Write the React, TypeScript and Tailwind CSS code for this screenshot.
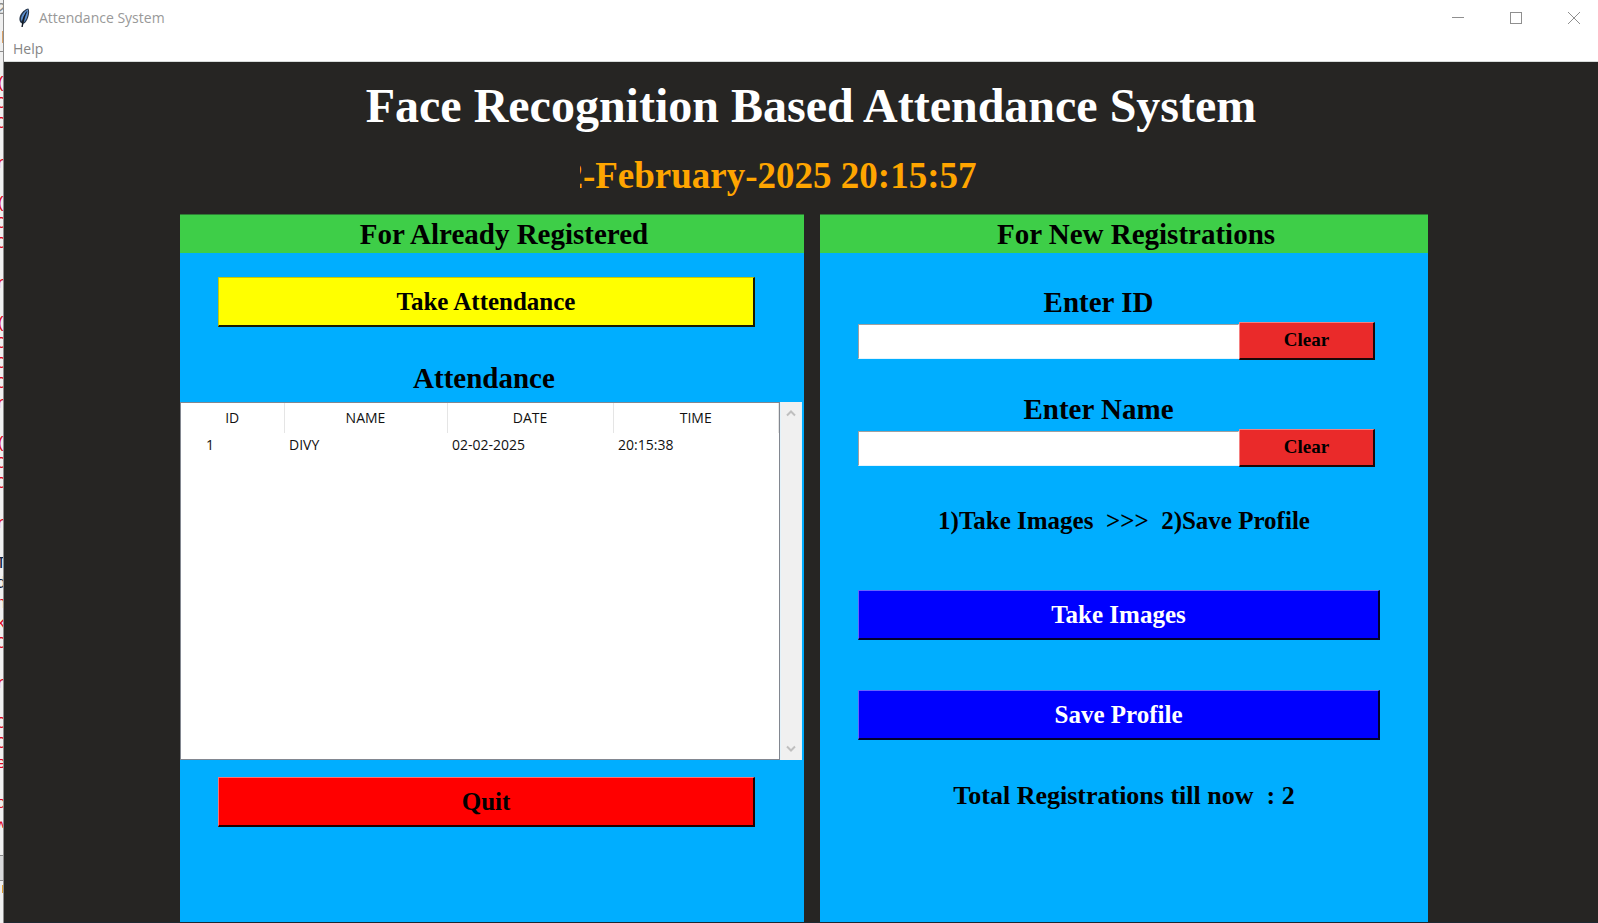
import { useState } from "react";

const codeLines = [
  "(", "C", "C", "", "r", "", "(", "C", "C", "", "r", "", "(", "C", "C", "C", "r", "", "(", "C",
  "C", "", "r", "", "T", "d", "n", "k", "C", "", "r", "", "C", "C", "e", "", "o", "w",
];

const records = [{ id: "1", name: "DIVY", date: "02-02-2025", time: "20:15:38" }];

const raised = "block border-t border-l border-r-2 border-b-2 font-bold text-center";

function EditorBehind() {
  return (
    <div aria-hidden="true" className="flex w-1 shrink-0 flex-col overflow-hidden border-r border-[#8c8c8c] bg-[#f0f0f0] font-['Liberation_Mono',monospace] text-[17px] leading-5">
      <div className="flex h-[52px] flex-col justify-between border-b border-[#8c8c8c]">
        <span className="-ml-1 text-[#8a8a8a]">2</span>
        <span className="mb-2 ml-[2px] h-3 w-1 bg-[#d9a066]" />
      </div>
      <div className="mt-[22px] mb-[21px]">
        {codeLines.map((line, i) => (
          <div key={i} className={line === "T" || line === "d" ? "-ml-1 h-5 text-[#102040]" : "-ml-1 h-5 text-[#e00020]"}>
            {line}
          </div>
        ))}
      </div>
      <div className="h-[26px] border-y border-[#8c8c8c] bg-[#d9dadb]" />
      <div className="mt-1 ml-[2px] h-2 w-1 bg-[#e0a030]" />
    </div>
  );
}

function Feather() {
  return (
    <svg viewBox="0 0 16 20" className="h-5 w-4" aria-hidden="true">
      <path d="M12.300 .6c1.300 1.600 1 5.400-.1 8.600-.9 2.600-2.300 5.400-4.600 6.600l-1 3.300-.8-.2.200-3.300C3.300 14.200 2.900 11 4 8.100 5.200 4.600 9.200 1 12.300.6z" fill="#26364a" />
      <path d="M11.800 1.500c.8 2.300.1 5.200-1 8.300-.7 1.900-1.600 3.600-2.900 4.400L9.400 8.200 11.200 3.400 7.600 8.300 5.700 13.200c-1-1.400-.8-3.500.1-5.400C6.900 5 9.500 2.300 11.800 1.500z" fill="#5b8fd0" />
      <path d="M10.800 3.500C8.500 7 7 11.500 6 19" stroke="#0d1219" strokeWidth="1" fill="none" />
    </svg>
  );
}

function TitleBar() {
  return (
    <div className="flex h-9 items-center bg-white pl-3 text-[#999]">
      <Feather />
      <span className="ml-[7px] flex-1 text-sm leading-5">Attendance System</span>
      <div className="flex gap-[10px]">
        <button aria-label="Minimize" className="flex h-9 w-12 items-center justify-center">
          <svg viewBox="0 0 12 12" className="size-3"><path d="M0 5.500h12" stroke="#8f8f8f" /></svg>
        </button>
        <button aria-label="Maximize" className="flex h-9 w-12 items-center justify-center">
          <svg viewBox="0 0 12 12" className="size-3"><rect x=".5" y=".5" width="11" height="11" fill="none" stroke="#8f8f8f" /></svg>
        </button>
        <button aria-label="Close" className="flex h-9 w-12 items-center justify-center">
          <svg viewBox="0 0 12 12" className="size-3"><path d="M0 0l12 12M12 0L0 12" stroke="#8f8f8f" /></svg>
        </button>
      </div>
    </div>
  );
}

function PanelTitle({ children }: { children: string }) {
  return (
    <h2 className="border-t border-[#2f7d35] bg-[#3ece48] pl-6 text-center text-[29px] leading-[38px] font-bold">{children}</h2>
  );
}

function AttendanceTable() {
  return (
    <div className="flex h-[358px] pr-[2px]">
      <div className="flex-1 border border-[#828790] bg-white font-['Open_Sans',sans-serif] text-sm">
        <table className="w-full table-fixed border-collapse text-left text-[#111]">
          <colgroup>
            <col className="w-[103px]" />
            <col className="w-[163px]" />
            <col className="w-[166px]" />
            <col />
          </colgroup>
          <thead>
            <tr className="h-[30px]">
              {["ID", "NAME", "DATE", "TIME"].map((h) => (
                <th key={h} className="border-r border-[#e5e5e5] text-center font-normal">{h}</th>
              ))}
            </tr>
          </thead>
          <tbody>
            {records.map((r) => (
              <tr key={r.id} className="h-6">
                <td className="pl-[25px]">{r.id}</td>
                <td className="pl-[5px]">{r.name}</td>
                <td className="pl-[5px]">{r.date}</td>
                <td className="pl-[5px]">{r.time}</td>
              </tr>
            ))}
          </tbody>
        </table>
      </div>
      <div className="flex w-[22px] flex-col justify-between border-x border-[#e2f2fa] bg-[#f0f0f0] py-[6px]">
        <button aria-label="Scroll up" className="flex justify-center">
          <svg viewBox="0 0 10 10" className="size-[10px]"><path d="M1 7.500l4-4 4 4" fill="none" stroke="#bfbfbf" strokeWidth="2" /></svg>
        </button>
        <button aria-label="Scroll down" className="flex justify-center">
          <svg viewBox="0 0 10 10" className="size-[10px]"><path d="M1 2.500l4 4 4-4" fill="none" stroke="#bfbfbf" strokeWidth="2" /></svg>
        </button>
      </div>
    </div>
  );
}

function Field({ id, label }: { id: string; label: string }) {
  const [value, setValue] = useState("");
  return (
    <div className="mt-[30px]">
      <label htmlFor={id} className="block pr-[51px] text-center text-[29px] leading-[39px] font-bold">{label}</label>
      <div className="flex items-center pr-[53px] pl-[38px]">
        <input
          id={id}
          value={value}
          onChange={(e) => setValue(e.target.value)}
          className="h-[35px] min-w-0 flex-1 border border-t-[#a0a0a0] border-r-white border-b-[#e3f4ff] border-l-[#a0a0a0] bg-white px-1 text-xl outline-none"
        />
        <button
          onClick={() => setValue("")}
          className={`${raised} h-[38px] w-[136px] border-t-[#f58080] border-r-[#1c0808] border-b-[#1c0808] border-l-[#f58080] bg-[#ea2a2a] text-[19px]`}
        >
          Clear
        </button>
      </div>
    </div>
  );
}

export default function App() {
  return (
    <div className="flex min-h-screen text-black">
      <EditorBehind />
      <div className="flex flex-1 flex-col bg-[#262523]">
        <header className="border-b border-[#d8dcda] bg-white font-['Open_Sans',sans-serif]">
          <TitleBar />
          <nav className="flex h-[25px] items-center pl-[9px]">
            <button className="text-sm leading-5 text-[#858585]">Help</button>
          </nav>
        </header>
        <main className="flex flex-1 flex-col border-b border-[#1e2730] pt-4 font-['Liberation_Serif',serif]">
          <h1 className="pl-5 text-center text-[48px] leading-[56px] font-bold text-white">Face Recognition Based Attendance System</h1>
          <div className="mt-5 mb-4 flex justify-center pr-[46px]">
            <time className="flex w-[397px] justify-end overflow-hidden text-[37px] leading-[44px] font-bold whitespace-nowrap text-[#ffa500]">
              02-February-2025 20:15:57
            </time>
          </div>
          <div className="grid flex-1 grid-cols-[39fr_38fr] gap-4 pr-[170px] pl-[176px]">
            <section className="bg-[#00aeff]">
              <PanelTitle>For Already Registered</PanelTitle>
              <div className="mt-6 pr-[49px] pl-[38px]">
                <button className={`${raised} h-[50px] w-full border-t-[#c8c800] border-r-[#1a1a00] border-b-[#1a1a00] border-l-[#c8c800] bg-[#ffff00] text-[25px]`}>
                  Take Attendance
                </button>
              </div>
              <h3 className="mt-8 mb-1 pr-4 text-center text-[29px] leading-[39px] font-bold">Attendance</h3>
              <AttendanceTable />
              <div className="mt-[17px] pr-[49px] pl-[38px]">
                <button className={`${raised} h-[50px] w-full border-t-[#ff7070] border-r-[#200000] border-b-[#200000] border-l-[#ff7070] bg-[#ff0000] text-[25px]`}>
                  Quit
                </button>
              </div>
            </section>
            <section className="bg-[#00aeff]">
              <PanelTitle>For New Registrations</PanelTitle>
              <Field id="student-id" label="Enter ID" />
              <Field id="student-name" label="Enter Name" />
              <p className="mt-[38px] text-center text-[25px] leading-8 font-bold whitespace-pre">{"1)Take Images  >>>  2)Save Profile"}</p>
              <div className="mt-[53px] flex flex-col gap-[50px] pr-12 pl-[38px]">
                <button className={`${raised} h-[50px] border-t-[#6464ff] border-r-[#000030] border-b-[#000030] border-l-[#6464ff] bg-[#0000ff] text-[25px] text-white`}>
                  Take Images
                </button>
                <button className={`${raised} h-[50px] border-t-[#6464ff] border-r-[#000030] border-b-[#000030] border-l-[#6464ff] bg-[#0000ff] text-[25px] text-white`}>
                  Save Profile
                </button>
              </div>
              <p className="mt-10 text-center text-[26px] leading-8 font-bold whitespace-pre">{"Total Registrations till now  : 2"}</p>
            </section>
          </div>
        </main>
      </div>
    </div>
  );
}
